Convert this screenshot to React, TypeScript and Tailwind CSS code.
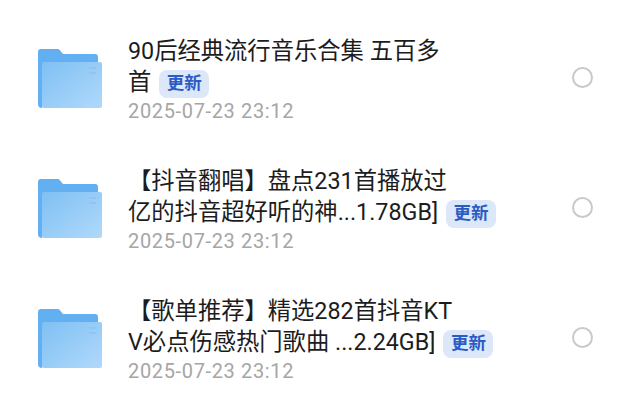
const files = [
  { lines: ["90后经典流行音乐合集 五百多", "首"], date: "2025-07-23 23:12" },
  { lines: ["【抖音翻唱】盘点231首播放过", "亿的抖音超好听的神...1.78GB]"], date: "2025-07-23 23:12" },
  { lines: ["【歌单推荐】精选282首抖音KT", "V必点伤感热门歌曲 ...2.24GB]"], date: "2025-07-23 23:12" },
];

function FolderIcon() {
  return (
    <svg width="66" height="62" viewBox="0 0 66 62" className="shrink-0">
      <defs>
        <linearGradient id="folderFront" x1="0" y1="0" x2="1" y2="1">
          <stop offset="0" stopColor="#7fc0f3" />
          <stop offset="1" stopColor="#b0d9fb" />
        </linearGradient>
      </defs>
      <path d="M1 5a3 3 0 0 1 3-3h17a2 2 0 0 1 1.500.7L26 7h32a3 3 0 0 1 3 3v30H5v21a4 4 0 0 1-4-4z" fill="#62b0f2" />
      <path d="M5 17a2 2 0 0 1 2-2h56a2 2 0 0 1 2 2v42a2 2 0 0 1-2 2H7a2 2 0 0 1-2-2z" fill="url(#folderFront)" />
      <path d="M52 21h7M52 26h7" stroke="#8dc2ee" strokeWidth="1.6" />
    </svg>
  );
}

function UpdateBadge() {
  return (
    <span className="ml-2 inline-flex h-[28px] w-[50px] items-center justify-center rounded-[8px] bg-[#dce7fa] align-[1px] text-[17.5px] font-bold leading-none tracking-normal text-[#2a5cc4]">
      更新
    </span>
  );
}

export default function App() {
  return (
    <div
      className="flex h-[414px] w-[640px] flex-col overflow-hidden bg-white pt-[34px]"
      style={{ fontFamily: '"Roboto", "Noto Sans CJK SC", sans-serif' }}
    >
      {files.map((file) => (
        <div key={file.lines[0]} className="flex h-[130px] shrink-0 items-start pl-[37px] pr-[47px]">
          <div className="mt-[13px] w-[91px] shrink-0">
            <FolderIcon />
          </div>
          <div className="mt-[2px] min-w-0 flex-1">
            {file.lines.map((line, i) => (
              <div key={line} className="h-[31px] whitespace-nowrap text-[23.3px] leading-[31px] text-[#1c1c1c]">
                {line}
                {i === 1 && <UpdateBadge />}
              </div>
            ))}
            <div className="mt-[1px] text-[20px] leading-[24px] tracking-[0.65px] text-[#a6a6a6]">{file.date}</div>
          </div>
          <div className="mt-[33px] h-[21px] w-[21px] shrink-0 rounded-full border-2 border-[#c9c9c9]" />
        </div>
      ))}
    </div>
  );
}
